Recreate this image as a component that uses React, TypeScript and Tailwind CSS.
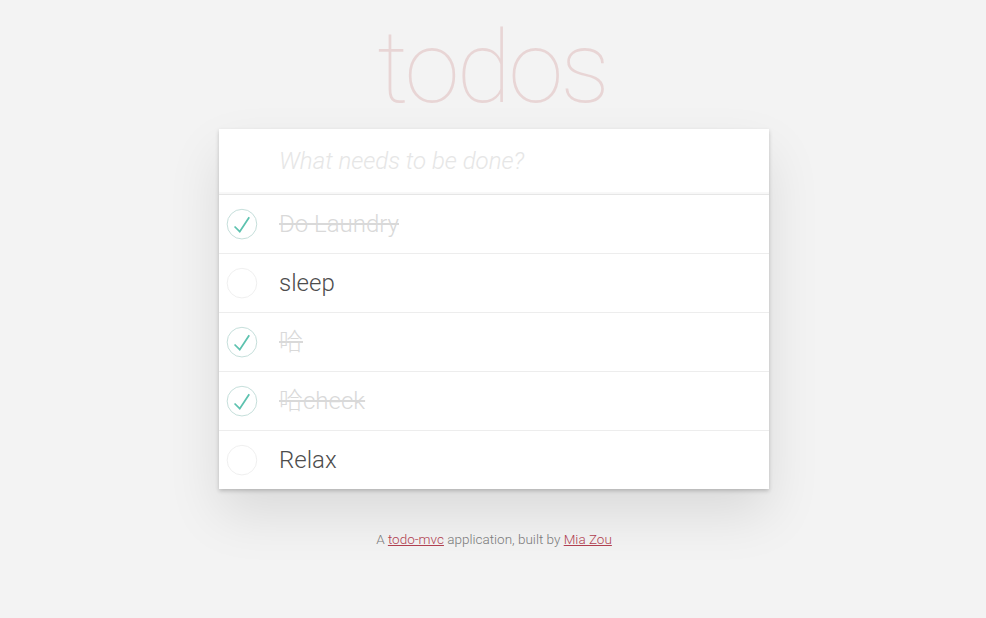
import React from 'react';

type Todo = { id: number; title: string; done: boolean };

const todos: Todo[] = [
  { id: 1, title: "Do Laundry", done: true },
  { id: 2, title: "sleep", done: false },
  { id: 3, title: "哈", done: true },
  { id: 4, title: "哈check", done: true },
  { id: 5, title: "Relax", done: false },
];

const font = { fontFamily: 'Roboto, "Noto Sans CJK SC", sans-serif' };

const Toggle: React.FC<{ done: boolean }> = ({ done }) => (
  <svg width="40" height="40" viewBox="-10 -18 100 135" className="shrink-0">
    <circle cx="50" cy="50" r="50" fill="none" stroke={done ? "#bddad5" : "#ededed"} strokeWidth="3" />
    {done && <path fill="#5dc2af" d="M72 25L42 71 27 56l-4 4 20 20 34-52z" />}
  </svg>
);

const App: React.FC = () => {
  return (
    <div className="min-h-screen bg-[#f3f3f3] text-[#4d4d4d]" style={font}>
      <div className="w-[550px] mx-auto pt-[8px] translate-x-[1px]">
        <h1 className="text-center text-[100px] leading-[120px] font-thin tracking-[-3px] -translate-x-[2px] text-[rgba(175,47,47,0.15)]">todos</h1>

        <div className="bg-white mt-[1px] shadow-[0_2px_4px_0_rgba(0,0,0,0.2),0_25px_50px_0_rgba(0,0,0,0.1)]">
          <div className="pl-[60px] pr-4 py-4 text-[24px] leading-[33px] font-light italic text-[#e6e6e6] shadow-[inset_0_-2px_1px_rgba(0,0,0,0.03)]">
            What needs to be done?
          </div>
          <ul className="border-t border-[#e6e6e6]">
            {todos.map((t, i) => (
              <li
                key={t.id}
                className={`flex items-center text-[24px] ${i < todos.length - 1 ? 'border-b border-[#ededed]' : ''}`}
              >
                <div className="w-[45px] flex">
                  <Toggle done={t.done} />
                </div>
                <span
                  className={`pl-[15px] py-[15px] leading-[28px] font-light ${t.done ? 'line-through text-[#d9d9d9]' : 'text-[#4d4d4d]'}`}
                >
                  {t.title}
                </span>
              </li>
            ))}
          </ul>
        </div>

        <p className="mt-[40px] text-center text-[13.5px] font-light text-[#7a7a7a]">
          A <a href="#" className="underline text-[#b04050]">todo-mvc</a> application, built by{' '}
          <a href="#" className="underline text-[#b04050]">Mia Zou</a>
        </p>
      </div>
    </div>
  );
};

export default App;
